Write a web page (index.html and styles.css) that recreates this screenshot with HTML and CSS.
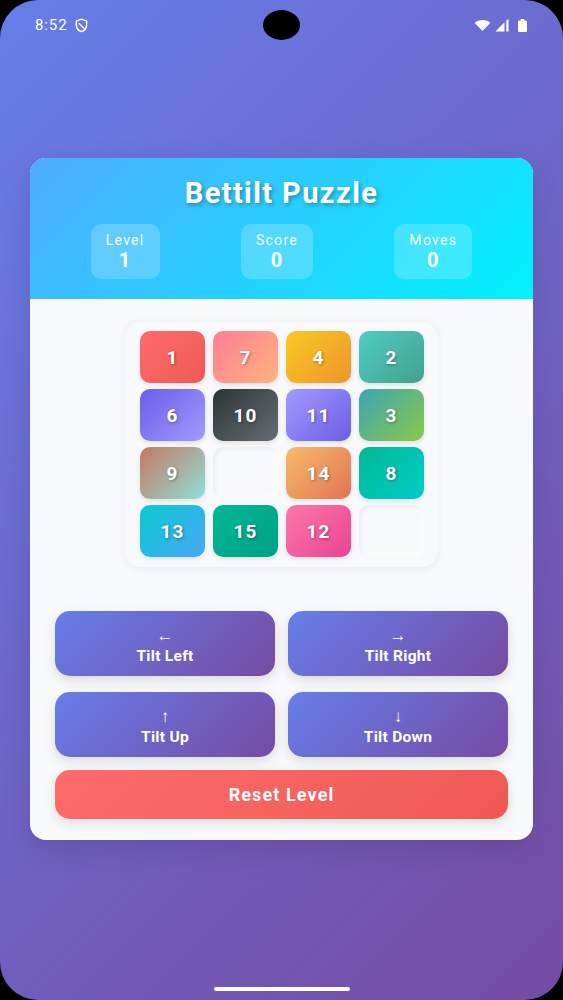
FILE: index.html
```html
<!DOCTYPE html>
<html lang="en">
<head>
<meta charset="utf-8">
<title>Bettilt Puzzle</title>
<link rel="stylesheet" href="styles.css">
</head>
<body>
<div class="phone">
  <div class="status-bar">
    <div class="status-left">
      <span class="time">8:52</span>
      <svg class="shield" viewBox="0 0 16 18" width="13" height="15">
        <path d="M8 1.2 L14.3 3.6 V8.3 C14.3 12.3 11.6 15.3 8 16.6 C4.4 15.3 1.7 12.3 1.7 8.3 V3.6 Z" fill="none" stroke="#fff" stroke-width="1.8" stroke-linejoin="round"/>
        <path d="M4.6 6.2 L11.6 13" stroke="#fff" stroke-width="1.7"/>
      </svg>
    </div>
    <div class="camera"></div>
    <div class="status-right">
      <svg viewBox="0 0 18 12" width="17" height="11">
        <path d="M9 12 L0.5 3.2 C5 -0.9 13 -0.9 17.5 3.2 Z" fill="#fff"/>
      </svg>
      <svg viewBox="0 0 14 13" width="14" height="13">
        <path d="M0.5 12.5 L9.5 3.3 V12.5 Z" fill="#fff"/>
        <path d="M11.3 1.5 L13.5 0 V12.5 H11.3 Z" fill="#fff"/>
      </svg>
      <svg viewBox="0 0 9 13" width="9" height="13">
        <rect x="2.7" y="0" width="3.6" height="2" fill="#fff"/>
        <rect x="0" y="1.5" width="9" height="11.5" rx="1.2" fill="#fff"/>
      </svg>
    </div>
  </div>

  <main class="main">
    <section class="card">
      <header class="card-header">
        <h1 class="title">Bettilt Puzzle</h1>
        <div class="stats">
          <div class="stat"><div class="stat-label">Level</div><div class="stat-value">1</div></div>
          <div class="stat"><div class="stat-label">Score</div><div class="stat-value">0</div></div>
          <div class="stat"><div class="stat-label">Moves</div><div class="stat-value">0</div></div>
        </div>
      </header>

      <div class="board-wrap">
        <div class="board">
          <div class="tile t1">1</div>
          <div class="tile t7">7</div>
          <div class="tile t4">4</div>
          <div class="tile t2">2</div>
          <div class="tile t6">6</div>
          <div class="tile t10">10</div>
          <div class="tile t11">11</div>
          <div class="tile t3">3</div>
          <div class="tile t9">9</div>
          <div class="tile empty"></div>
          <div class="tile t14">14</div>
          <div class="tile t8">8</div>
          <div class="tile t13">13</div>
          <div class="tile t15">15</div>
          <div class="tile t12">12</div>
          <div class="tile empty"></div>
        </div>
      </div>

      <div class="controls">
        <div class="tilt-grid">
          <button class="tilt-btn"><span class="arrow">←</span><span class="label">Tilt Left</span></button>
          <button class="tilt-btn"><span class="arrow">→</span><span class="label">Tilt Right</span></button>
          <button class="tilt-btn"><span class="arrow">↑</span><span class="label">Tilt Up</span></button>
          <button class="tilt-btn"><span class="arrow">↓</span><span class="label">Tilt Down</span></button>
        </div>
        <button class="reset-btn">Reset Level</button>
      </div>
    </section>
  </main>

  <div class="home-bar"></div>
</div>
</body>
</html>
```

FILE: styles.css
```css
* { box-sizing: border-box; }

html, body {
  margin: 0;
  padding: 0;
  background: #000;
}

body {
  font-family: Roboto, "Liberation Sans", Arial, sans-serif;
}

.phone {
  width: 563px;
  height: 1000px;
  border-radius: 38px;
  overflow: hidden;
  background: linear-gradient(135deg, #667eea 0%, #764ba2 100%);
  display: flex;
  flex-direction: column;
}

/* status bar */
.status-bar {
  display: grid;
  grid-template-columns: 1fr 37px 1fr;
  align-items: center;
  padding: 10px 36px 0 35px;
  height: 40px;
}

.status-left {
  display: flex;
  align-items: center;
  gap: 7px;
  color: #fff;
}

.time {
  font-size: 15px;
  letter-spacing: 0.9px;
  line-height: 30px;
}

.camera {
  width: 37px;
  height: 30px;
  border-radius: 50%;
  background: #000;
}

.status-right {
  display: flex;
  justify-content: flex-end;
  align-items: center;
  gap: 4px;
}

.status-right svg:last-child { margin-left: 5px; }

/* main */
.main {
  padding: 0 30px;
  margin-top: 118px;
}

.card {
  background: #f8f9fa;
  border-radius: 16px;
  overflow: hidden;
  box-shadow: 0 10px 30px rgba(0, 0, 0, 0.12);
}

.card-header {
  background: linear-gradient(135deg, #4facfe 0%, #00f2fe 100%);
  padding: 17px 20px 20px;
  text-align: center;
  color: #fff;
}

.title {
  margin: 0;
  font-size: 29px;
  line-height: 36px;
  font-weight: 700;
  letter-spacing: 1.4px;
  text-shadow: 2px 2px 4px rgba(0, 0, 0, 0.3);
}

.stats {
  display: flex;
  justify-content: space-around;
  margin-top: 13px;
}

.stat {
  background: rgba(255, 255, 255, 0.2);
  border-radius: 10px;
  padding: 8px 15px;
}

.stat-label {
  font-size: 14px;
  line-height: 17px;
  letter-spacing: 1.3px;
  opacity: 0.95;
}

.stat-value {
  font-size: 20px;
  line-height: 22px;
  font-weight: 700;
  letter-spacing: 1px;
}

/* board */
.board-wrap {
  padding: 21px 0 22px;
  display: flex;
  justify-content: center;
}

.board {
  display: grid;
  grid-template-columns: repeat(4, 65px);
  grid-auto-rows: 52px;
  gap: 6px 8px;
  padding: 11px 14px 10px 15px;
  background: #f8f9fb;
  border-radius: 15px;
  box-shadow: 0 2px 8px rgba(0, 0, 0, 0.06), inset 0 1px 3px rgba(0, 0, 0, 0.04);
}

.tile {
  border-radius: 10px;
  display: flex;
  align-items: center;
  justify-content: center;
  color: #fff;
  font-size: 19px;
  font-weight: 700;
  letter-spacing: 1px;
  text-shadow: 1px 1px 3px rgba(0, 0, 0, 0.35);
  box-shadow: 0 2px 5px rgba(0, 0, 0, 0.1);
}

.tile.empty {
  background: #f8f9fa;
  box-shadow: inset 2px 2px 5px rgba(0, 0, 0, 0.06), inset -2px -2px 5px rgba(255, 255, 255, 0.9);
}

.t1  { background: linear-gradient(135deg, #ff6b6b, #ee5a52); }
.t7  { background: linear-gradient(135deg, #ff7e95, #ffb27f); }
.t4  { background: linear-gradient(135deg, #f9ca24, #f0932b); }
.t2  { background: linear-gradient(135deg, #4ecdc4, #44a08d); }
.t6  { background: linear-gradient(135deg, #6c5ce7, #a29bfe); }
.t10 { background: linear-gradient(135deg, #2d3436, #636e72); }
.t11 { background: linear-gradient(135deg, #a29bfe, #6c5ce7); }
.t3  { background: linear-gradient(135deg, #3ca5b2, #8cc84b); }
.t9  { background: linear-gradient(135deg, #c67860, #8ee0d8); }
.t14 { background: linear-gradient(135deg, #f7bb6a, #e27456); }
.t8  { background: linear-gradient(135deg, #00b894, #00cec9); }
.t13 { background: linear-gradient(135deg, #0ccad2, #45a8f3); }
.t15 { background: linear-gradient(135deg, #00b894, #00a085); }
.t12 { background: linear-gradient(135deg, #fd79a8, #e84393); }

/* controls */
.controls {
  padding: 22px 25px 21px;
}

.tilt-grid {
  display: grid;
  grid-template-columns: 1fr 1fr;
  grid-auto-rows: 65px;
  gap: 16px 13px;
}

.tilt-btn {
  border: none;
  border-radius: 15px;
  background: linear-gradient(135deg, #667eea 0%, #764ba2 100%);
  color: #fff;
  font-family: inherit;
  display: flex;
  flex-direction: column;
  align-items: center;
  justify-content: center;
  gap: 2px;
  padding: 5px 0 0;
  box-shadow: 0 4px 12px rgba(0, 0, 0, 0.12);
}

.arrow {
  font-size: 17px;
  line-height: 18px;
}

.label {
  font-size: 15.5px;
  line-height: 20px;
  font-weight: 700;
  letter-spacing: 0.3px;
}

.reset-btn {
  display: block;
  width: 100%;
  height: 49px;
  margin-top: 13px;
  border: none;
  border-radius: 15px;
  background: linear-gradient(135deg, #ff6b6b 0%, #ee5a52 100%);
  color: #fff;
  font-family: inherit;
  font-size: 18px;
  font-weight: 700;
  letter-spacing: 1.1px;
  box-shadow: 0 4px 12px rgba(0, 0, 0, 0.12);
}

.home-bar {
  margin: auto auto 9px;
  width: 136px;
  height: 4px;
  border-radius: 2px;
  background: #fff;
}
```
